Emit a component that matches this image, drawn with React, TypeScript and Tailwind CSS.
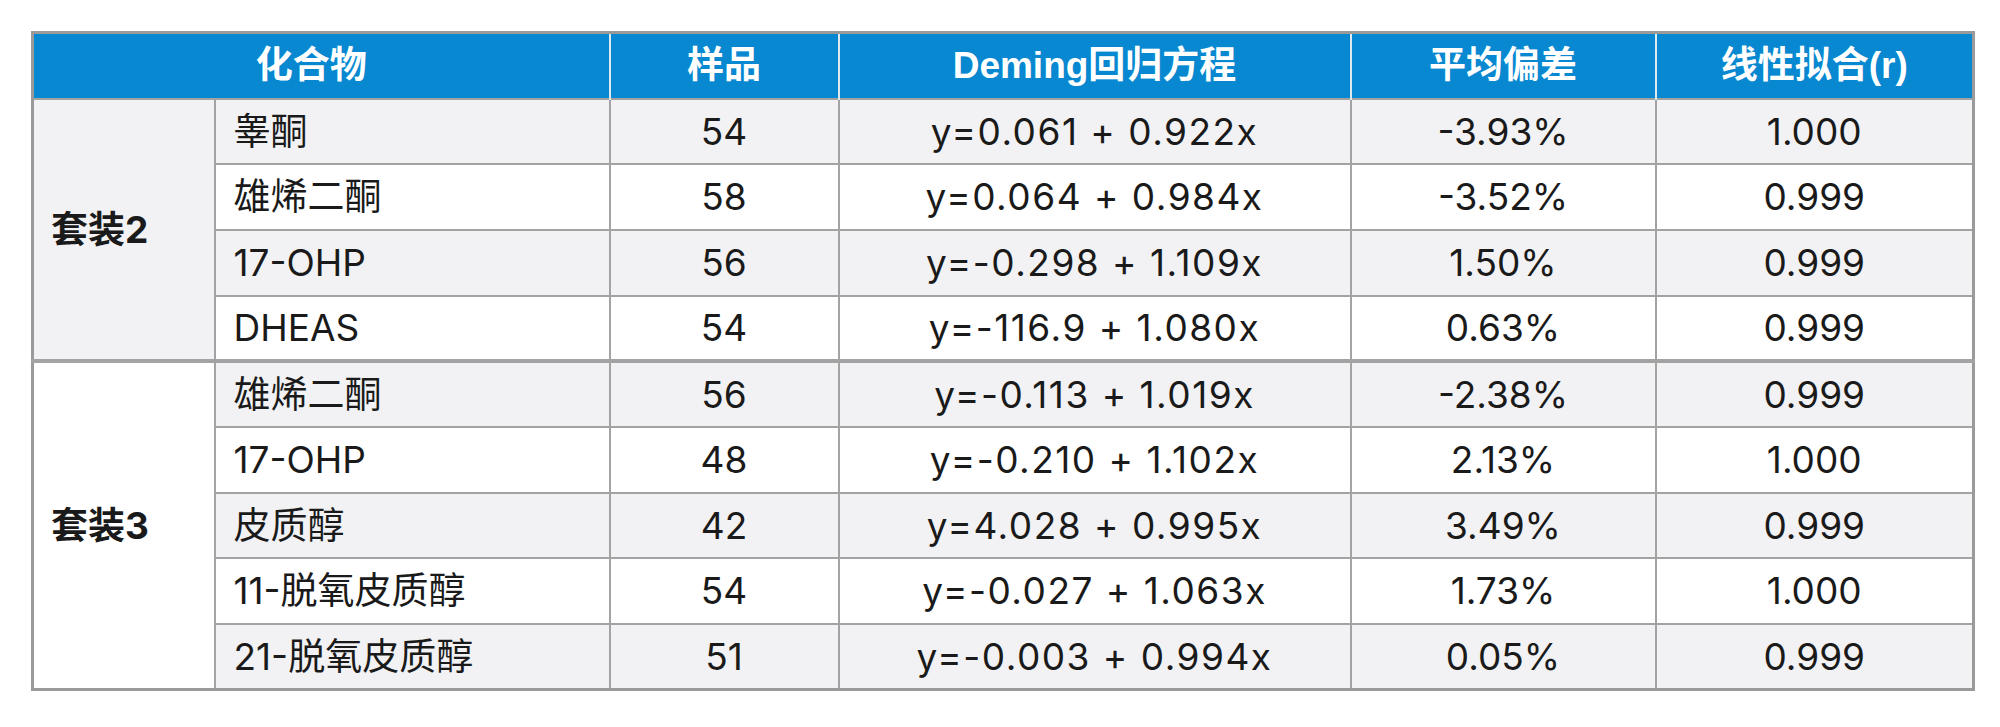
const rows = [
  { group: "套装2", span: 4, name: "睾酮", n: "54", eq: "y=0.061 + 0.922x", bias: "-3.93%", r: "1.000" },
  { name: "雄烯二酮", n: "58", eq: "y=0.064 + 0.984x", bias: "-3.52%", r: "0.999" },
  { name: "17-OHP", n: "56", eq: "y=-0.298 + 1.109x", bias: "1.50%", r: "0.999" },
  { name: "DHEAS", n: "54", eq: "y=-116.9 + 1.080x", bias: "0.63%", r: "0.999" },
  { group: "套装3", span: 5, name: "雄烯二酮", n: "56", eq: "y=-0.113 + 1.019x", bias: "-2.38%", r: "0.999" },
  { name: "17-OHP", n: "48", eq: "y=-0.210 + 1.102x", bias: "2.13%", r: "1.000" },
  { name: "皮质醇", n: "42", eq: "y=4.028 + 0.995x", bias: "3.49%", r: "0.999" },
  { name: "11-脱氧皮质醇", n: "54", eq: "y=-0.027 + 1.063x", bias: "1.73%", r: "1.000" },
  { name: "21-脱氧皮质醇", n: "51", eq: "y=-0.003 + 0.994x", bias: "0.05%", r: "0.999" },
];

const headers = ["样品", "Deming回归方程", "平均偏差", "线性拟合(r)"];

export default function App() {
  return (
    <div className="h-[727px] w-[2000px] bg-white pl-[31px] pt-[31px]">
      <table className="w-[1941px] table-fixed border-collapse border-[3px] border-[#9a9a9a] font-['Inter','Noto_Sans_CJK_SC',sans-serif] text-[37px] text-[#1a1a1a]">
        <colgroup>
          <col className="w-[182px]" />
          <col className="w-[395px]" />
          <col className="w-[229px]" />
          <col className="w-[512px]" />
          <col className="w-[305px]" />
          <col className="w-[318px]" />
        </colgroup>
        <thead>
          <tr className="h-[66px] bg-[#0788d0] font-['Liberation_Sans','Noto_Sans_CJK_SC',sans-serif] text-[37px] font-bold text-white">
            <th colSpan={2} className="border-r-2 border-[#dfe9f0] pr-[20px]">化合物</th>
            {headers.map((h, i) => (
              <th key={h} className={i < headers.length - 1 ? "border-r-2 border-[#dfe9f0]" : ""}>
                {h}
              </th>
            ))}
          </tr>
        </thead>
        <tbody>
          {rows.map((row, i) => (
            <tr
              key={i}
              className={`h-[65.7px] ${i % 2 === 0 ? "bg-[#f2f2f4]" : "bg-white"} ${i === 4 ? "border-t-[4px]" : "border-t-2"} border-[#a3a3a3]`}
            >
              {row.group && (
                <td
                  rowSpan={row.span}
                  className={`border-2 border-[#a3a3a3] pl-[17px] text-[37px] font-bold ${i === 0 ? "bg-[#f2f2f4]" : "bg-white"}`}
                >
                  {row.group}
                </td>
              )}
              <td className="border-2 border-[#a3a3a3] pl-[18px]">{row.name}</td>
              <td className="border-2 border-[#a3a3a3] text-center">{row.n}</td>
              <td className="border-2 border-[#a3a3a3] text-center tracking-[1.5px]">{row.eq}</td>
              <td className="border-2 border-[#a3a3a3] text-center">{row.bias}</td>
              <td className="border-2 border-[#a3a3a3] text-center">{row.r}</td>
            </tr>
          ))}
        </tbody>
      </table>
    </div>
  );
}
